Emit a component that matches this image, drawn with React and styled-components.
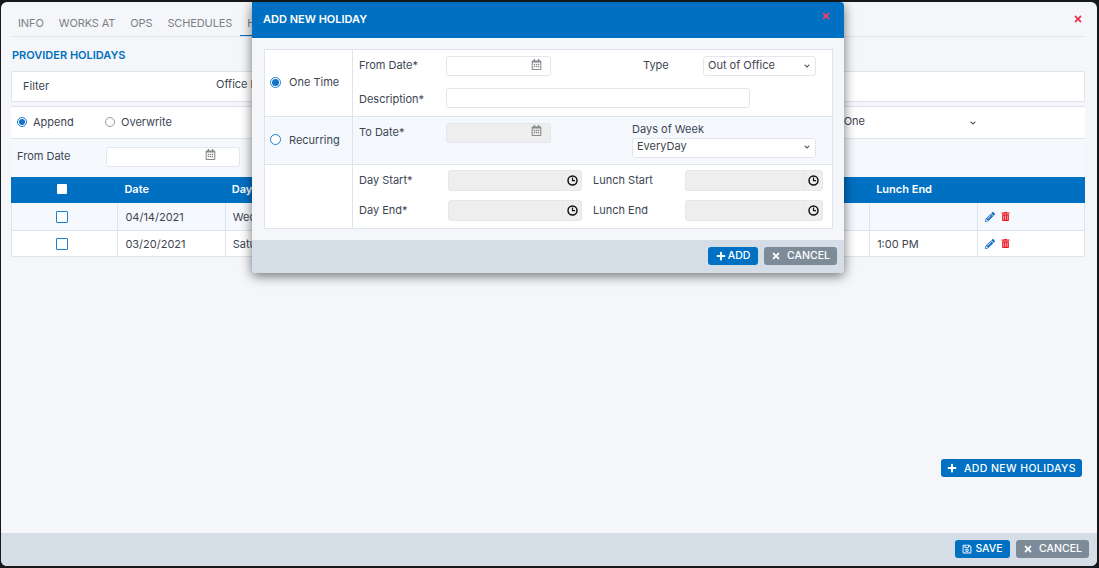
import React from "react"
import styled, { createGlobalStyle } from "styled-components"
import { FaPlus, FaTimes, FaPencilAlt, FaTrashAlt, FaRegCalendarAlt, FaRegSave, FaChevronDown } from "react-icons/fa"

const BLUE = "#0070c2"
const TEXT = "#3b4654"
const LINE = "#dfe3ec"
const FONT = `Inter, "Open Sans", "Liberation Sans", sans-serif`

const Global = createGlobalStyle`
  html, body { margin: 0; padding: 0; background: #16181b; }
  * { box-sizing: border-box; }
  body { font-family: ${FONT}; font-size: 11px; color: ${TEXT}; }
`

const Page = styled.div`
  position: relative;
  width: 1099px;
  height: 568px;
  overflow: hidden;
  padding: 2px 2px 2px 1px;
`

const Panel = styled.div`
  width: 100%;
  height: 100%;
  background: #f4f6f9;
  border-radius: 6px;
  overflow: hidden;
  display: flex;
  flex-direction: column;
`

const Content = styled.div`
  flex: 1;
  padding: 0 12px 0 10px;
  display: flex;
  flex-direction: column;
`

const Tabs = styled.div`
  height: 35px;
  display: flex;
  align-items: flex-end;
  gap: 15px;
  padding: 0 0 6px 7px;
  border-bottom: 1px solid ${LINE};
  position: relative;
`

const Tab = styled.span`
  color: #7b7f86;
  font-size: 11px;
  letter-spacing: -0.12px;
  position: relative;

  &::after {
    content: "";
    display: ${(p) => (p.$active ? "block" : "none")};
    position: absolute;
    left: -7px;
    right: -7px;
    bottom: -6px;
    height: 1px;
    background: ${BLUE};
  }
`

const PanelClose = styled(FaTimes)`
  position: absolute;
  right: 2px;
  top: 12px;
  color: #e8324e;
  font-size: 10px;
`

const Title = styled.div`
  color: ${BLUE};
  font-size: 11px;
  line-height: 14px;
  font-weight: 600;
  margin: 11px 0 9px 1px;
`

const FilterBox = styled.div`
  height: 31px;
  background: #fff;
  border: 1px solid ${LINE};
  display: flex;
  align-items: center;
  padding: 0 11px;
  gap: 167px;
`

const OptionsRow = styled.div`
  height: 33px;
  margin-top: 4px;
  background: #fff;
  border-top: 1px solid ${LINE};
  border-bottom: 1px solid ${LINE};
  display: flex;
  align-items: center;
  padding: 0 0 2px 6px;
`

const Choice = styled.label`
  display: flex;
  align-items: center;
  gap: 6px;
  width: ${(p) => p.$width || "auto"};
`

const Radio = styled.span`
  width: ${(p) => p.$size || 10}px;
  height: ${(p) => p.$size || 10}px;
  border-radius: 50%;
  border: 1px solid ${(p) => (p.$on || p.$blue ? "#1a7fd0" : "#9a9a9a")};
  background: #fff;
  display: flex;
  align-items: center;
  justify-content: center;
  flex: none;

  &::after {
    content: "";
    display: ${(p) => (p.$on ? "block" : "none")};
    width: ${(p) => (p.$size || 10) - 4}px;
    height: ${(p) => (p.$size || 10) - 4}px;
    border-radius: 50%;
    background: #0f72c8;
  }
`

const OfficeSelect = styled.div`
  margin-left: auto;
  margin-right: 109px;
  display: flex;
  justify-content: flex-end;
  align-items: center;
  gap: 105px;

  span {
    margin-top: -1px;
  }

  svg {
    margin-top: 2px;
  }
`

const DateRow = styled.div`
  height: 38px;
  background: #f5f9fd;
  display: flex;
  align-items: center;
  padding: 0 0 3px 6px;
`

const DateLabel = styled.span`
  width: 89px;
  margin-top: -2px;
`

const Field = styled.div`
  height: ${(p) => p.$h || 20}px;
  width: ${(p) => p.$w}px;
  background: ${(p) => (p.$off ? "#eeeeee" : "#fff")};
  border: 1px solid #e3e6ee;
  border-radius: 3px;
  display: flex;
  align-items: center;
  justify-content: flex-end;
  padding: 0 ${(p) => p.$pad ?? 9}px 4px 0;
  color: #85878b;
  font-size: 11px;
  margin-top: ${(p) => p.$up || 0}px;
`

const Table = styled.div`
  display: grid;
  grid-template-columns: repeat(10, 107.4px);
`

const HeadCell = styled.div`
  height: 26px;
  background: ${BLUE};
  color: #fff;
  font-weight: 600;
  font-size: 11px;
  display: flex;
  align-items: center;
  padding: 0 0 3px ${(p) => p.$inset || 6}px;
`

const Cell = styled.div`
  height: ${(p) => p.$h}px;
  background: ${(p) => (p.$alt ? "#f5f9fd" : "#fff")};
  border-bottom: 1px solid ${LINE};
  border-right: 1px solid ${LINE};
  border-left: ${(p) => (p.$first ? `1px solid ${LINE}` : "none")};
  display: flex;
  align-items: center;
  padding-left: ${(p) => p.$inset || 7}px;
  gap: 6px;
  color: #3f4550;
`

const Check = styled.span`
  width: ${(p) => (p.$head ? 10 : 12)}px;
  height: ${(p) => (p.$head ? 10 : 12)}px;
  display: block;
  background: #fff;
  border: ${(p) => (p.$head ? "none" : "1px solid #1a7fd0")};
  border-radius: 1px;
`

const Pencil = styled(FaPencilAlt)`
  color: #1f73c4;
  font-size: 10px;
`

const Trash = styled(FaTrashAlt)`
  color: #f01c24;
  font-size: 9px;
`

const AddRow = styled.div`
  margin-top: auto;
  padding: 0 3px 56px 0;
  display: flex;
  justify-content: flex-end;
`

const Footer = styled.div`
  height: 33px;
  background: #d5dde6;
  display: flex;
  align-items: center;
  justify-content: flex-end;
  gap: 6px;
  padding: 0 ${(p) => p.$right}px 2px 0;
  flex: none;
`

const Button = styled.button`
  height: 18px;
  border: none;
  border-radius: 3px;
  background: ${(p) => (p.$grey ? "#7d8b99" : BLUE)};
  color: #fff;
  font-family: ${FONT};
  font-size: 10.5px;
  font-weight: 500;
  letter-spacing: ${(p) => p.$track || 0}px;
  display: flex;
  align-items: center;
  justify-content: center;
  gap: ${(p) => p.$gap || 3}px;
  width: ${(p) => p.$w}px;
  padding: 0;

  svg {
    font-size: 10px;
  }
`

const Modal = styled.div`
  position: absolute;
  left: 252px;
  top: 2px;
  width: 592px;
  height: 271px;
  background: #f4f6f9;
  border-radius: 0 4px 4px 4px;
  box-shadow: 0 3px 12px rgba(0, 0, 0, 0.55);
  display: flex;
  flex-direction: column;
  overflow: hidden;
`

const ModalHead = styled.div`
  height: 36px;
  flex: none;
  background: ${BLUE};
  color: #fff;
  font-weight: 600;
  font-size: 11px;
  display: flex;
  align-items: center;
  justify-content: space-between;
  padding: 0 13px 2px 11px;
`

const ModalClose = styled(FaTimes)`
  color: #ee3f5c;
  font-size: 10px;
  margin-top: -6px;
`

const FormBox = styled.div`
  margin: 11px 11px 11px 12px;
  height: 180px;
  border: 1px solid ${LINE};
  flex: none;
  display: grid;
  grid-template-columns: 88px 1fr;
  grid-template-rows: 67px 48px 1fr;
`

const KindCell = styled.div`
  background: ${(p) => (p.$alt ? "#f5f9fd" : "#fff")};
  border-right: 1px solid ${LINE};
  border-bottom: ${(p) => (p.$last ? "none" : `1px solid ${LINE}`)};
  display: flex;
  align-items: center;
  gap: 8px;
  padding: 0 0 2px 5px;
`

const FormCell = styled.div`
  background: ${(p) => (p.$alt ? "#f5f9fd" : "#fff")};
  border-bottom: ${(p) => (p.$last ? "none" : `1px solid ${LINE}`)};
  display: grid;
  grid-template-columns: ${(p) => p.$cols};
  grid-auto-rows: ${(p) => p.$row || "20px"};
  row-gap: ${(p) => p.$gap || 12}px;
  padding: ${(p) => p.$top || 6}px 0 0 6px;
  align-items: center;
`

const Label = styled.span`
  white-space: nowrap;
  margin-top: ${(p) => p.$up || 0}px;
`

const Wide = styled.div`
  grid-column: 2 / span 3;
`

const Spacer = styled.span``

const Select = styled.div`
  height: 20px;
  width: ${(p) => p.$w}px;
  background: #fff;
  border: 1px solid #e3e6ee;
  border-radius: 3px;
  display: flex;
  align-items: center;
  justify-content: space-between;
  padding: 0 5px 3px 4px;
  color: #3f4550;

  svg {
    font-size: 6px;
    margin-top: 2px;
  }
`

const DaysBlock = styled.div`
  display: flex;
  flex-direction: column;
  gap: 2px;
  margin-top: -3px;
`

const TimeField = styled.div`
  height: 21px;
  background: #eeeeee;
  border: 1px solid #e3e6ee;
  border-radius: 3px;
  width: ${(p) => p.$w}px;
  display: flex;
  justify-content: flex-end;
`

const TimeAddon = styled.span`
  width: 19px;
  border-left: 1px solid #e6e8ee;
  display: flex;
  align-items: center;
  justify-content: center;
  padding-bottom: 1px;
`

const holidays = [
  { date: "04/14/2021", day: "Wednesday", lunchEnd: "", alt: true, h: 28 },
  { date: "03/20/2021", day: "Saturday", lunchEnd: "1:00 PM", alt: false, h: 26 },
]

const heads = ["Date", "Day", "Type", "Description", "Day Start", "Day End", "Lunch Start", "Lunch End", ""]

function Time({ w }) {
  return (
    <TimeField $w={w}>
      <TimeAddon>
        <svg width="11" height="11" viewBox="0 0 12 12" fill="none" stroke="#111" strokeWidth="1.6">
          <circle cx="6" cy="6" r="4.9" />
          <path d="M6 2.8v3.4h2.8" strokeWidth="1.3" />
        </svg>
      </TimeAddon>
    </TimeField>
  )
}

export default function App() {
  return (
    <>
      <Global />
      <Page>
        <Panel>
          <Content>
            <Tabs>
              <Tab>INFO</Tab>
              <Tab>WORKS AT</Tab>
              <Tab>OPS</Tab>
              <Tab>SCHEDULES</Tab>
              <Tab $active>HOLIDAYS</Tab>
              <PanelClose />
            </Tabs>
            <Title>PROVIDER HOLIDAYS</Title>
            <FilterBox>
              <Label $up={-2}>Filter</Label>
              <Label $up={-6}>Office Name</Label>
            </FilterBox>
            <OptionsRow>
              <Choice $width="88px"><Radio $on />Append</Choice>
              <Choice><Radio />Overwrite</Choice>
              <OfficeSelect>
                <span>Office One</span>
                <FaChevronDown size={6} />
              </OfficeSelect>
            </OptionsRow>
            <DateRow>
              <DateLabel>From Date</DateLabel>
              <Field $w={134} $pad={23}><FaRegCalendarAlt /></Field>
            </DateRow>
            <Table>
              <HeadCell $inset={46}><Check $head /></HeadCell>
              {heads.map((h, i) => (
                <HeadCell key={i}>{h}</HeadCell>
              ))}
              {holidays.map((row) => (
                <React.Fragment key={row.date}>
                  <Cell $first $inset={44} $alt={row.alt} $h={row.h}><Check /></Cell>
                  <Cell $alt={row.alt} $h={row.h}>{row.date}</Cell>
                  <Cell $alt={row.alt} $h={row.h}>{row.day}</Cell>
                  <Cell $alt={row.alt} $h={row.h} />
                  <Cell $alt={row.alt} $h={row.h} />
                  <Cell $alt={row.alt} $h={row.h} />
                  <Cell $alt={row.alt} $h={row.h} />
                  <Cell $alt={row.alt} $h={row.h} />
                  <Cell $alt={row.alt} $h={row.h}>{row.lunchEnd}</Cell>
                  <Cell $alt={row.alt} $h={row.h}><Pencil /><Trash /></Cell>
                </React.Fragment>
              ))}
            </Table>
            <AddRow>
              <Button $w={141} $gap={7} $track={0.4}><FaPlus />ADD NEW HOLIDAYS</Button>
            </AddRow>
          </Content>
          <Footer $right={8}>
            <Button $w={55}><FaRegSave />SAVE</Button>
            <Button $grey $w={73} $gap={6}><FaTimes />CANCEL</Button>
          </Footer>
        </Panel>

        <Modal>
          <ModalHead>
            <span>ADD NEW HOLIDAY</span>
            <ModalClose />
          </ModalHead>
          <FormBox>
            <KindCell><Radio $on $blue $size={11} />One Time</KindCell>
            <FormCell $cols="87px 105px 92px 60px 113px">
              <Label $up={-2}>From Date*</Label>
              <Field $w={105} $pad={8}><FaRegCalendarAlt /></Field>
              <Spacer />
              <Label $up={-2}>Type</Label>
              <Select $w={113}>Out of Office<FaChevronDown /></Select>
              <Label $up={2}>Description*</Label>
              <Wide><Field $w={304} /></Wide>
            </FormCell>
            <KindCell $alt><Radio $blue $size={11} />Recurring</KindCell>
            <FormCell $alt $cols="87px 105px 81px 184px" $row="36px">
              <Label $up={-18}>To Date*</Label>
              <Field $off $w={105} $pad={8} $up={-17}><FaRegCalendarAlt /></Field>
              <Spacer />
              <DaysBlock>
                <Label>Days of Week</Label>
                <Select $w={184}>EveryDay<FaChevronDown /></Select>
              </DaysBlock>
            </FormCell>
            <KindCell $last />
            <FormCell $last $cols="89px 134px 11px 92px 138px" $row="21px" $gap={9} $top={5}>
              <Label $up={-2}>Day Start*</Label>
              <Time w={134} />
              <Spacer />
              <Label $up={-2}>Lunch Start</Label>
              <Time w={138} />
              <Label $up={-2}>Day End*</Label>
              <Time w={134} />
              <Spacer />
              <Label $up={-2}>Lunch End</Label>
              <Time w={138} />
            </FormCell>
          </FormBox>
          <Footer $right={7}>
            <Button $w={50} $gap={2}><FaPlus />ADD</Button>
            <Button $grey $w={73} $gap={6}><FaTimes />CANCEL</Button>
          </Footer>
        </Modal>
      </Page>
    </>
  )
}
